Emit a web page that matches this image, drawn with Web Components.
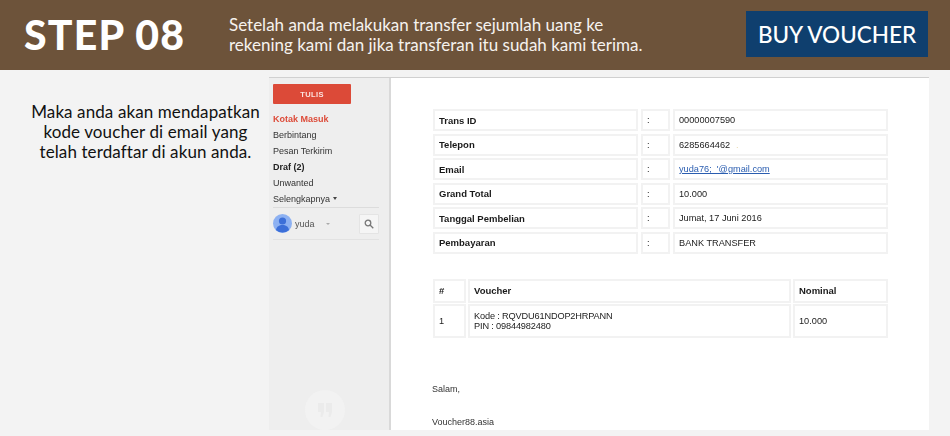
<!DOCTYPE html>
<html>
<head>
<meta charset="utf-8">
<title>Step 08</title>
<style>
  html, body { margin: 0; padding: 0; background: #f3f3f3; }
  body { width: 950px; height: 436px; overflow: hidden; font-family: "Lato", "Liberation Sans", sans-serif; }
  .row { display: flex; }
</style>
</head>
<body>
<step-header step="STEP 08" action="BUY VOUCHER">Setelah anda melakukan transfer sejumlah uang ke<br>rekening kami dan jika transferan itu sudah kami terima.</step-header>
<div class="row">
  <step-note>Maka anda akan mendapatkan<br>kode voucher di email yang<br>telah terdaftar di akun anda.</step-note>
  <mail-shot>
    <mail-sidebar slot="side"></mail-sidebar>
    <info-table></info-table>
    <voucher-table></voucher-table>
    <mail-sign></mail-sign>
  </mail-shot>
</div>

<script>
// step-header.js
class StepHeader extends HTMLElement {
  constructor() {
    super();
    this.attachShadow({ mode: "open" });
    this.shadowRoot.innerHTML = `
      <style>
        :host {
          display: flex;
          align-items: center;
          height: 70px;
          background: #6d533a;
          color: #fff;
          font-family: "Lato", sans-serif;
        }
        .step {
          width: 229px;
          padding: 0 0 2px 24px;
          box-sizing: border-box;
          font-size: 41px;
          font-weight: 900;
          letter-spacing: 1.2px;
          white-space: nowrap;
        }
        .text {
          flex: 1;
          font-size: 17px;
          line-height: 20px;
          white-space: nowrap;
          color: #f6f2ee;
        }
        .buy {
          width: 182px;
          height: 46px;
          margin: 0 22px 2px 0;
          display: flex;
          align-items: center;
          justify-content: center;
          background: #0f3f6e;
          font-size: 22.5px;
          font-weight: 500;
        }
      </style>
      <div class="step"></div>
      <div class="text"><slot></slot></div>
      <div class="buy"></div>
    `;
  }

  connectedCallback() {
    this.shadowRoot.querySelector(".step").textContent = this.getAttribute("step");
    this.shadowRoot.querySelector(".buy").textContent = this.getAttribute("action");
  }
}
customElements.define("step-header", StepHeader);

class StepNote extends HTMLElement {
  constructor() {
    super();
    this.attachShadow({ mode: "open" });
    this.shadowRoot.innerHTML = `
      <style>
        :host {
          display: block;
          width: 269px;
          box-sizing: border-box;
          padding: 32px 3px 0 25px;
          text-align: center;
          color: #111;
          font-size: 17px;
          line-height: 20px;
          letter-spacing: 0.1px;
          white-space: nowrap;
        }
      </style>
      <slot></slot>
    `;
  }
}
customElements.define("step-note", StepNote);

// the gmail screenshot: sidebar on the left, mail body on the right
class MailShot extends HTMLElement {
  constructor() {
    super();
    this.attachShadow({ mode: "open" });
    this.shadowRoot.innerHTML = `
      <style>
        :host {
          display: flex;
          width: 660px;
          height: 353px;
          margin-top: 7px;
          border-top: 1px solid #d0d0d0;
          box-sizing: border-box;
          overflow: hidden;
          filter: blur(0.45px);
          font-family: "Liberation Sans", Arial, sans-serif;
        }
        .body {
          flex: 1;
          background: #fff;
          padding: 31px 41px 0 42px;
        }
      </style>
      <slot name="side"></slot>
      <div class="body"><slot></slot></div>
    `;
  }
}
customElements.define("mail-shot", MailShot);

class MailSidebar extends HTMLElement {
  constructor() {
    super();
    this.attachShadow({ mode: "open" });
    const items = [
      ["Kotak Masuk", "active"],
      ["Berbintang", ""],
      ["Pesan Terkirim", ""],
      ["Draf (2)", "bold"],
      ["Unwanted", ""],
    ];
    this.shadowRoot.innerHTML = `
      <style>
        :host {
          display: block;
          position: relative;
          width: 122px;
          box-sizing: border-box;
          background: #eeeeee;
          border-right: 2px solid #d9d9d9;
          padding: 6px 0 0 4px;
          font-size: 9px;
          color: #333;
        }
        .compose {
          width: 78px;
          height: 20px;
          border-radius: 1px;
          background: #dc4a38;
          color: #fbe3df;
          font-size: 7.5px;
          font-weight: bold;
          letter-spacing: 0.4px;
          display: flex;
          align-items: center;
          justify-content: center;
        }
        ul { list-style: none; margin: 7px 0 0; padding: 0; }
        li { height: 16px; line-height: 16px; white-space: nowrap; }
        .active { color: #dd4b39; font-weight: bold; }
        .bold { color: #222; font-weight: bold; }
        .more::after {
          content: "";
          display: inline-block;
          margin: 0 0 2px 3px;
          border: 2.5px solid transparent;
          border-top: 3px solid #444;
          border-bottom: 0;
        }
        .user {
          display: flex;
          align-items: center;
          width: 106px;
          height: 31px;
          border-top: 1px solid #dcdcdc;
          border-bottom: 1px solid #e2e2e2;
          color: #555;
        }
        .user svg { display: block; margin-right: 3px; }
        .caret {
          margin-left: 11px;
          border: 2px solid transparent;
          border-top: 2.5px solid #aaa;
          border-bottom: 0;
        }
        .search {
          margin-left: auto;
          width: 18px;
          height: 18px;
          background: #f5f5f5;
          border: 1px solid #e4e4e4;
          border-radius: 1px;
          display: flex;
          align-items: center;
          justify-content: center;
        }
        .search svg { margin: 0; }
        .quote {
          position: absolute;
          left: 36px;
          bottom: 0;
          width: 40px;
          height: 40px;
          border-radius: 50%;
          background: #f2f2f2;
          display: flex;
          align-items: center;
          justify-content: center;
        }
      </style>
      <div class="compose">TULIS</div>
      <ul>
        ${items.map(i => `<li class="${i[1]}">${i[0]}</li>`).join("")}
        <li class="more">Selengkapnya</li>
      </ul>
      <div class="user">
        <svg width="19" height="19" viewBox="0 0 19 19">
          <circle cx="9.5" cy="9.5" r="9.5" fill="#8db1f2"/>
          <circle cx="9.5" cy="7" r="3.6" fill="#3c6fd8"/>
          <path d="M3 16c.6-3.6 3.2-5 6.5-5s5.900 1.400 6.500 5a9.500 9.500 0 0 1-13 0z" fill="#3c6fd8"/>
        </svg>
        <span>yuda</span>
        <span class="caret"></span>
        <span class="search">
          <svg width="10" height="10" viewBox="0 0 10 10" fill="none" stroke="#777" stroke-width="1.300">
            <circle cx="4" cy="4" r="2.800"/>
            <path d="M6 6l3.300 3.300"/>
          </svg>
        </span>
      </div>
      <div class="quote">
        <svg width="16" height="14" viewBox="0 0 16 14" fill="#ebebeb">
          <path d="M1 0h6v9l-1.500 5H3.500L4 9H1zM9 0h6v9l-1.500 5h-2l.5-5H9z"/>
        </svg>
      </div>
    `;
  }
}
customElements.define("mail-sidebar", MailSidebar);

const cellStyle = `
  .grid { display: grid; column-gap: 3px; row-gap: 2.500px; font-size: 9.200px; color: #222; }
  .cell {
    box-sizing: border-box;
    border: 2px solid #f2f2f2;
    padding-left: 4px;
    display: flex;
    align-items: center;
    white-space: nowrap;
  }
  .head { font-size: 9.500px; font-weight: bold; color: #1a1a1a; }
  a { color: #2a5db0; text-decoration: underline; }
  .speck { color: #e6d6a8; margin-left: 6px; }
  .code { letter-spacing: -0.15px; }
`;

class InfoTable extends HTMLElement {
  constructor() {
    super();
    this.attachShadow({ mode: "open" });
    const rows = [
      ["Trans ID", "00000007590"],
      ["Telepon", `6285664462<span class="speck">.</span>`],
      ["Email", `<a>yuda76; &nbsp;'@gmail.com</a>`],
      ["Grand Total", "10.000"],
      ["Tanggal Pembelian", "Jumat, 17 Juni 2016"],
      ["Pembayaran", "BANK TRANSFER"],
    ];
    this.shadowRoot.innerHTML = `
      <style>
        :host { display: block; }
        ${cellStyle}
        .grid { grid-template-columns: 205px 29px 215px; grid-auto-rows: 22px; }
      </style>
      <div class="grid">
        ${rows.map(r => `
          <div class="cell head">${r[0]}</div>
          <div class="cell">:</div>
          <div class="cell">${r[1]}</div>
        `).join("")}
      </div>
    `;
  }
}
customElements.define("info-table", InfoTable);

class VoucherTable extends HTMLElement {
  constructor() {
    super();
    this.attachShadow({ mode: "open" });
    this.shadowRoot.innerHTML = `
      <style>
        :host { display: block; margin-top: 25px; }
        ${cellStyle}
        .grid { grid-template-columns: 33px 323px 95px; grid-template-rows: 24px 34px; column-gap: 2px; row-gap: 1px; }
      </style>
      <div class="grid">
        <div class="cell head">#</div>
        <div class="cell head">Voucher</div>
        <div class="cell head">Nominal</div>
        <div class="cell">1</div>
        <div class="cell code">Kode : RQVDU61NDOP2HRPANN<br>PIN : 09844982480</div>
        <div class="cell">10.000</div>
      </div>
    `;
  }
}
customElements.define("voucher-table", VoucherTable);

class MailSign extends HTMLElement {
  constructor() {
    super();
    this.attachShadow({ mode: "open" });
    this.shadowRoot.innerHTML = `
      <style>
        :host {
          display: block;
          margin: 46px 0 0 -1px;
          font-size: 9px;
          color: #333;
        }
        p { margin: 0 0 22.500px; line-height: 11px; }
      </style>
      <p>Salam,</p>
      <p>Voucher88.asia</p>
    `;
  }
}
customElements.define("mail-sign", MailSign);
</script>
</body>
</html>
